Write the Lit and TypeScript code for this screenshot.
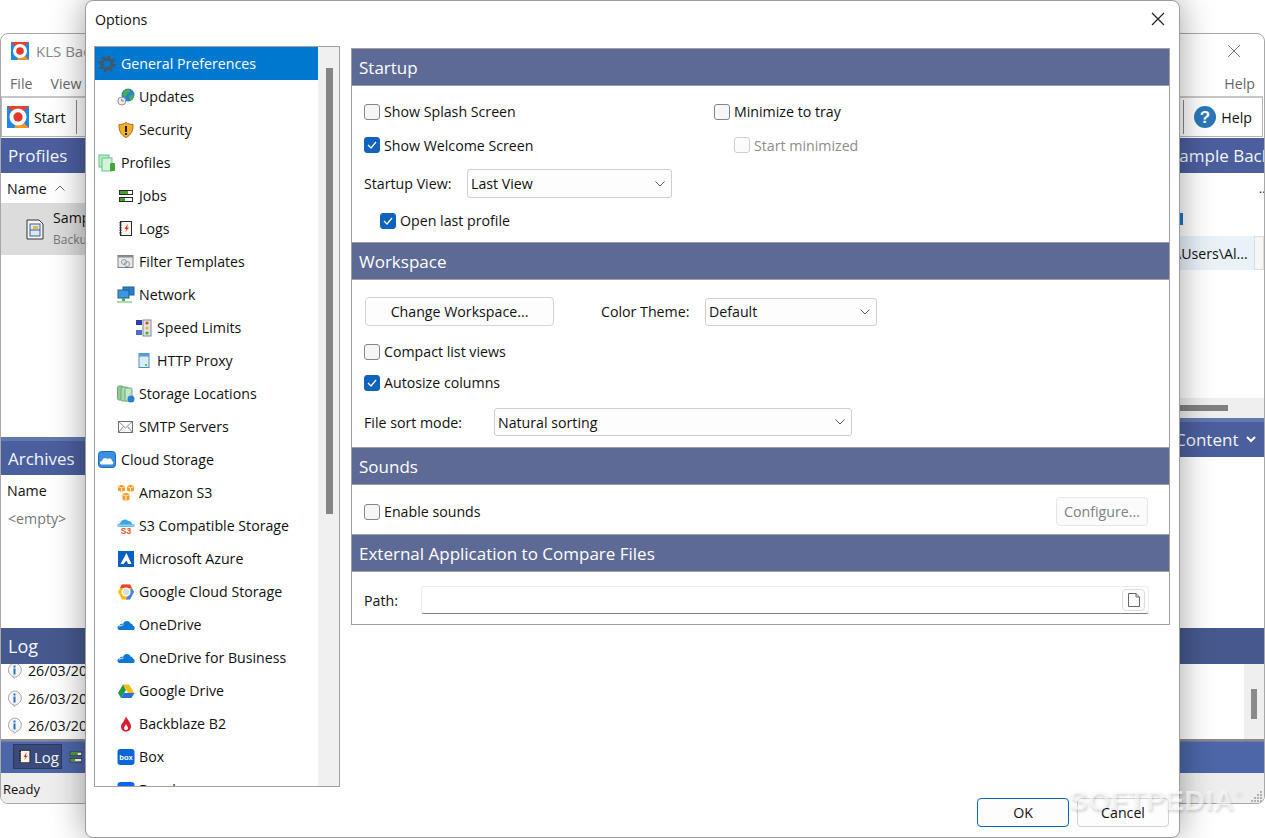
import { LitElement, html, css } from 'lit';
import { customElement } from 'lit/decorators.js';

const logo = (size: number) => html`<svg width=${size} height=${size} viewBox="0 0 18 18">
  <rect width="18" height="18" fill="#1e88e5"/>
  <path d="M0 0H18L9 9L0 0Z" fill="#e8412c"/>
  <path d="M9 9L18 0V18Z" fill="#1e88e5"/>
  <path d="M9 9L18 18H6Z" fill="#f39423"/>
  <circle cx="9" cy="9" r="7" fill="#fff"/>
  <circle cx="9" cy="9" r="3.8" fill="#e2382a"/>
</svg>`;

const box = (body: unknown) => html`<svg width="18" height="18" viewBox="0 0 18 18">${body}</svg>`;

const icons: Record<string, unknown> = {
  gear: box(html`<svg><circle cx="9" cy="9" r="5" fill="none" stroke="#44586a" stroke-width="3"/>
    <circle cx="9" cy="9" r="7.3" fill="none" stroke="#44586a" stroke-width="2.4" stroke-dasharray="3 2.73"/></svg>`),
  updates: box(html`<svg><circle cx="11" cy="7" r="6.500" fill="#2c7fd6"/>
    <path d="M7 2.500C9 1 12 0.800 13.500 2C13.500 5 10 5 10 7C10 9 7.500 9 5.500 7.500Z" fill="#45b04a"/>
    <path d="M12 8L17 6C17.500 9 15 12 13 13Z" fill="#45b04a"/>
    <circle cx="4.800" cy="13" r="4" fill="#eceff2" stroke="#8c9299"/>
    <path d="M4.800 10.800V13H6.800" fill="none" stroke="#777"/></svg>`),
  shield: box(html`<svg><path d="M9 1.500C11 3 13.500 3.500 16 3.500C16.500 10 13.500 14.500 9 16.500C4.500 14.500 1.500 10 2 3.500C4.500 3.500 7 3 9 1.500Z" fill="#f3ae2c" stroke="#a8701a"/>
    <rect x="8" y="5" width="2" height="6" fill="#1b1b1b"/><rect x="8" y="12" width="2" height="2" fill="#1b1b1b"/></svg>`),
  profiles: box(html`<svg><rect x="1" y="1" width="10" height="12" fill="#bdeccb" stroke="#62c184"/>
    <rect x="4" y="4" width="10" height="13" fill="#d4f3dd" stroke="#62c184"/>
    <rect x="12" y="9" width="5" height="8" rx="1" fill="#49a635"/></svg>`),
  jobs: box(html`<svg><rect x="2.500" y="3.500" width="13" height="4" fill="#fff" stroke="#2a2a2a"/><rect x="3" y="4" width="8" height="3" fill="#49a02e"/>
    <rect x="2.500" y="10.500" width="13" height="4" fill="#fff" stroke="#2a2a2a"/><rect x="3" y="11" width="5" height="3" fill="#49a02e"/></svg>`),
  logs: box(html`<svg><rect x="3.500" y="1.500" width="11" height="14" fill="#f7f5ee" stroke="#2a2a2a"/>
    <path d="M3.500 2V15" stroke="#2a2a2a" stroke-width="2" stroke-dasharray="1.500 1"/>
    <path d="M11 3.500L7.500 9H9.500L8 12.500L12 7.500H10Z" fill="#d8362a"/></svg>`),
  filter: box(html`<svg><rect x="1" y="2.500" width="15" height="12" fill="#e9e9e9" stroke="#808080"/><rect x="1" y="2.500" width="15" height="2" fill="#8a8a8a"/>
    <circle cx="7" cy="9" r="2.500" fill="none" stroke="#8d9aa6"/><circle cx="10" cy="11" r="2.500" fill="none" stroke="#8d9aa6"/></svg>`),
  network: box(html`<svg><rect x="6" y="1" width="11" height="8" fill="#2b7fc8" stroke="#1f5f98"/>
    <rect x="1" y="4" width="11" height="8" fill="#3d96dc" stroke="#1f5f98"/>
    <rect x="5" y="12" width="3" height="3" fill="#49b04a"/><rect x="0" y="15" width="15" height="2" fill="#a9dca9"/></svg>`),
  speed: box(html`<svg><rect x="1" y="1" width="6" height="5" fill="#2a3fa8"/><rect x="1" y="11" width="6" height="5" fill="#4a6fd0"/>
    <rect x="8" y="1" width="8" height="16" fill="#dfe3e8" stroke="#888"/>
    <circle cx="12" cy="4" r="1.600" fill="#e0402c"/><circle cx="12" cy="9" r="1.600" fill="#eeb52a"/><circle cx="12" cy="14" r="1.600" fill="#4aa83a"/></svg>`),
  proxy: box(html`<svg><rect x="4" y="1.500" width="10" height="14" fill="#dcecf7" stroke="#4a8fc0"/><rect x="4" y="1.500" width="10" height="3" fill="#5b9fd0"/>
    <rect x="10" y="12" width="2" height="2" fill="#62c050"/></svg>`),
  storage: box(html`<svg><rect x="0.500" y="1" width="6" height="14" rx="1.500" fill="#8fc99a" stroke="#6da86d"/>
    <rect x="4" y="2" width="7" height="14" rx="1.500" fill="#a8d8b0" stroke="#6da86d"/>
    <rect x="8" y="3" width="7" height="13" rx="1.500" fill="#c2e6c8" stroke="#6da86d"/>
    <circle cx="14" cy="14" r="3.500" fill="#2c7fd6"/></svg>`),
  smtp: box(html`<svg><rect x="1.500" y="3.500" width="14" height="11" fill="#fbfbfb" stroke="#6f6f6f"/>
    <path d="M1.500 3.500L8.500 10L15.500 3.500M1.500 14.500L6.500 8.500M15.500 14.500L10.500 8.500" fill="none" stroke="#8a8a8a"/></svg>`),
  cloud: box(html`<svg><rect x="0.500" y="0.500" width="17" height="16" rx="3" fill="#3b8fe0" stroke="#1f6bb8"/>
    <path d="M3.500 13.500C1.500 13.500 1.500 10 4 10C4.500 7.500 7.500 6 9.500 8C11 6.500 14 7.500 14 10C16 10.500 15.500 13.500 14 13.500Z" fill="#f6fbff"/></svg>`),
  s3: box(html`<svg><path d="M1 2L4.500 0.800L8 2V6.500L4.500 8L1 6.500Z" fill="#f79a1f"/><path d="M10 2L13.500 0.800L17 2V6.500L13.500 8L10 6.500Z" fill="#f79a1f"/>
    <path d="M5.500 10L9 8.800L12.500 10V15.500L9 17L5.500 15.500Z" fill="#f79a1f"/>
    <path d="M1 2.500L4.500 4L8 2.500M4.500 4V8M10 2.500L13.500 4L17 2.500M13.500 4V8M5.500 10.500L9 12L12.500 10.500M9 12V17" fill="none" stroke="#fff" stroke-width="0.800"/></svg>`),
  s3c: box(html`<svg><path d="M3 10C0 10 0 6.500 3 6.500C4 3 9 1 11 4C13 3.500 15 5 15 7C17.500 7 18 10 15.500 10Z" fill="#3aa6e0"/>
    <rect x="0" y="7.500" width="18" height="2" fill="#8fd0f2"/>
    <text x="9" y="16.500" text-anchor="middle" font-family="Liberation Sans" font-weight="700" font-size="8.500" fill="#d9531e">S3</text></svg>`),
  azure: box(html`<svg><rect x="1" y="1" width="16" height="16" fill="#0a5fc4"/><path d="M9.500 3L14.500 14H11L9.500 10.500L6.500 14H3.500Z" fill="#fff"/></svg>`),
  gcloud: box(html`<svg><path d="M5 1.500H13L17 9L13 16.500H5L1 9Z" fill="#fbbc05"/>
    <path d="M5 1.500H13L15 5H3Z" fill="#ea4335"/><path d="M15 5L17 9L13 16.500H9L12 9Z" fill="#4285f4"/>
    <circle cx="9" cy="9" r="3.800" fill="#dcdcdc" stroke="#fff" stroke-width="1.500"/></svg>`),
  onedrive: box(html`<svg><path d="M3 14C0 14 -0.500 10 2.500 9.500C3 8 4.500 7.500 6 8C7 4.500 12 4 13.500 7.500C15 7.500 16 8.500 16 9.800C18 10 18.500 14 16 14Z" fill="#0f78d4"/>
    <path d="M2 10.300L6.500 8.800" stroke="#fff" stroke-width="0.800"/></svg>`),
  gdrive: box(html`<svg><path d="M6 2.500H12L17.500 11.500H11.500Z" fill="#fbbc05"/>
    <path d="M4 16L7 11H17.500L14.500 16Z" fill="#2a6fe0"/><path d="M6 2.500L9 8L4 16L1 11Z" fill="#1e9b4a"/></svg>`),
  backblaze: box(html`<svg><path d="M9 1C9.500 4 14 7 14 11.500C14 14.500 12 16.500 9 16.500C6 16.500 4 14.500 4 11.500C4 8.500 8 6 9 1Z" fill="#d5202c"/>
    <path d="M9 9C9.500 11 11 11.500 11 13.200C11 14.400 10 15 9 15C8 15 7 14.400 7 13.200C7 11.500 8.500 11 9 9Z" fill="#fff"/></svg>`),
  boxapp: box(html`<svg><rect x="0.500" y="1" width="17" height="16" rx="3" fill="#0b65d8"/>
    <text x="9" y="12" text-anchor="middle" font-family="Liberation Sans" font-weight="700" font-size="7.500" fill="#fff">box</text></svg>`),
  dropbox: box(html`<svg><rect x="0.500" y="1" width="17" height="16" rx="3" fill="#0b65f0"/></svg>`),
};

const tree = [
  { level: 0, icon: 'gear', label: 'General Preferences', selected: true },
  { level: 1, icon: 'updates', label: 'Updates' },
  { level: 1, icon: 'shield', label: 'Security' },
  { level: 0, icon: 'profiles', label: 'Profiles' },
  { level: 1, icon: 'jobs', label: 'Jobs' },
  { level: 1, icon: 'logs', label: 'Logs' },
  { level: 1, icon: 'filter', label: 'Filter Templates' },
  { level: 1, icon: 'network', label: 'Network' },
  { level: 2, icon: 'speed', label: 'Speed Limits' },
  { level: 2, icon: 'proxy', label: 'HTTP Proxy' },
  { level: 1, icon: 'storage', label: 'Storage Locations' },
  { level: 1, icon: 'smtp', label: 'SMTP Servers' },
  { level: 0, icon: 'cloud', label: 'Cloud Storage' },
  { level: 1, icon: 's3', label: 'Amazon S3' },
  { level: 1, icon: 's3c', label: 'S3 Compatible Storage' },
  { level: 1, icon: 'azure', label: 'Microsoft Azure' },
  { level: 1, icon: 'gcloud', label: 'Google Cloud Storage' },
  { level: 1, icon: 'onedrive', label: 'OneDrive' },
  { level: 1, icon: 'onedrive', label: 'OneDrive for Business' },
  { level: 1, icon: 'gdrive', label: 'Google Drive' },
  { level: 1, icon: 'backblaze', label: 'Backblaze B2' },
  { level: 1, icon: 'boxapp', label: 'Box' },
  { level: 1, icon: 'dropbox', label: 'Dropbox' },
];

const chevron = html`<svg class="chev" width="10" height="6" viewBox="0 0 10 6"><path d="M0.500 0.500L5 5L9.500 0.500" fill="none" stroke="#555"/></svg>`;

@customElement('app-root')
export class AppRoot extends LitElement {
  static styles = css`
    :host {
      display: block;
      position: relative;
      width: 1265px;
      height: 838px;
      overflow: hidden;
      background: #fff;
      font-family: "Open Sans", "Noto Sans", sans-serif;
      font-size: 14.2px;
      color: #111;
    }
    * { box-sizing: border-box; }

    /* window behind the dialog */
    .main {
      position: absolute;
      left: 0;
      top: 33px;
      width: 1265px;
      height: 771px;
      display: flex;
      flex-direction: column;
      background: #fff;
      border: 1px solid #a8a8a8;
      border-radius: 8px;
      overflow: hidden;
    }
    .win-title { height: 31px; display: flex; align-items: center; justify-content: space-between; padding: 3px 23px 0 10px; flex: none; }
    .win-title .name { margin-left: 7px; color: #888; font-size: 15px; }
    .win-left { display: flex; align-items: center; }
    .menu { height: 31px; display: flex; justify-content: space-between; align-items: center; padding: 6px 9px 0 9px; color: #666; flex: none; }
    .menu .items { display: flex; gap: 18px; }
    .toolbar { height: 41px; flex: none; border: 1px solid #b4b4b4; border-top: 2px solid #c8c8c8; display: flex; justify-content: space-between; align-items: center; padding: 0 10px 0 5px; margin-right: 1px; }
    .tool { display: flex; align-items: center; gap: 5px; }
    .tool-sep { width: 1px; height: 34px; background: #888; }
    .tool-left { display: flex; align-items: center; gap: 10px; }
    .split { flex: 1; display: flex; margin-top: 1px; min-height: 0; }
    .col-left { flex: 1; display: flex; flex-direction: column; min-width: 0; }
    .col-right { width: 94px; flex: none; display: flex; flex-direction: column; overflow: hidden; }
    .bar {
      height: 35px;
      flex: none;
      background: #4b5f9e;
      color: #f4f6fb;
      font-size: 17px;
      display: flex;
      align-items: center;
      padding-left: 7px;
      white-space: nowrap;
    }
    .bar.strip { height: 38px; border-top: 4px solid #6478ad; }
    .bar.flush { padding-left: 0; }
    .col-head { height: 30px; display: flex; align-items: center; padding-left: 6px; flex: none; }
    .col-head .sort { margin-left: 8px; }
    .profile-row { height: 52px; background: #dcdcdc; display: flex; align-items: center; padding-left: 25px; flex: none; }
    .profile-row .lines { margin-left: 9px; display: flex; flex-direction: column; gap: 4px; margin-top: -3px; }
    .sub { font-size: 12px; color: #777; }
    .spacer-left { height: 182px; flex: none; }
    .spacer-right { height: 128px; flex: none; }
    .empty { padding: 4px 0 0 7px; color: #777; }
    .right-head { height: 30px; display: flex; align-items: center; flex: none; }
    .right-head .vsep { width: 1px; height: 30px; background: #ddd; margin-left: 82px; }
    .right-head .more { margin-left: 7px; font-size: 12px; }
    .marker { height: 33px; padding: 10px 0 0 10px; flex: none; }
    .marker div { width: 3px; height: 12px; background: #1c78c8; }
    .path-row { height: 34px; flex: none; display: flex; background: #e9f1f9; align-items: center; white-space: nowrap; justify-content: flex-end; }
    .path-row span { width: 84px; overflow: hidden; flex: none; padding-left: 6px; }
    .path-row i { width: 10px; height: 34px; background: #f6f6f6; border: 1px solid #ddd; flex: none; }
    .hscroll { height: 20px; flex: none; background: #efefef; padding-top: 7px; }
    .hscroll div { width: 48px; height: 6px; background: #808080; margin-left: 10px; }
    .content-bar { justify-content: space-between; padding: 0 8px 0 5px; height: 39px !important; }
    .log-bar { height: 36px; flex: none; background: #46598f; color: #f4f6fb; font-size: 18px; display: flex; align-items: center; padding: 0 0 0 7px; }
    .log { height: 77px; flex: none; display: flex; overflow: hidden; border-bottom: 2px solid #8a8a8a; }
    .log-list { flex: 1; display: flex; flex-direction: column; margin-top: -7px; }
    .log-row { height: 27.500px; flex: none; display: flex; align-items: center; padding-left: 5px; gap: 5px; }
    .log-track { width: 20px; flex: none; background: #efefef; padding: 25px 0 0 7px; }
    .log-track div { width: 6px; height: 30px; background: #8a8a8a; }
    .tabs { height: 32px; flex: none; background: #4d66a8; padding: 2px 0 0 12px; display: flex; gap: 6px; border-top: 1px solid #6b7aa6; }
    .tab { height: 25px; width: 49px; background: #3a4a7a; border: 1px solid #2d3a60; color: #f4f6fb; display: flex; align-items: center; gap: 1px; padding-left: 3px; font-size: 15px; }
    .tab svg, .tab-jobs svg { width: 16px; height: 16px; }
    .tab-jobs { display: flex; align-items: center; height: 25px; }
    .status { height: 30px; flex: none; display: flex; align-items: center; padding: 2px 0 0 2px; font-size: 13px; background: #eeeeee; }

    /* dialog */
    .dialog {
      position: absolute;
      left: 85px;
      top: 0;
      width: 1095px;
      height: 838px;
      background: #fff;
      border: 1px solid #9c9c9c;
      border-radius: 8px;
      box-shadow: 0 0 34px rgba(0, 0, 0, 0.38);
      display: flex;
      flex-direction: column;
    }
    .dlg-title { height: 45px; flex: none; display: flex; align-items: center; justify-content: space-between; padding: 0 14px 9px 9px; }
    .dlg-body { flex: none; height: 741px; display: flex; gap: 11px; padding: 0 9px 0 8px; }
    .tree { width: 246px; flex: none; height: 741px; border: 1px solid #a0a0a0; display: flex; overflow: hidden; }
    .tree-list { width: 223px; flex: none; }
    .tree-track { flex: 1; background: #f0f0f0; padding: 21px 0 0 8px; }
    .tree-thumb { width: 7px; height: 446px; background: #858585; }
    .node { height: 33px; display: flex; align-items: center; white-space: nowrap; }
    .node .ic { width: 18px; height: 18px; margin-right: 4px; flex: none; display: block; }
    .node .ic svg { display: block; }
    .lv0 { padding-left: 3px; }
    .lv0 .ic { margin-right: 5px; }
    .lv1 { padding-left: 22px; }
    .lv2 { padding-left: 40px; }
    .node.selected { background: #0078d0; color: #fff; }

    .pane { width: 819px; flex: none; align-self: flex-start; margin-top: 2px; border: 1px solid #a0a0a0; }
    .sec-head { height: 38px; background: #5d6a96; border-top: 1px solid #a0a0a0; border-bottom: 1px solid #a0a0a0; color: #fff; font-size: 17px; display: flex; align-items: center; padding-left: 7px; }
    .sec-head.first { height: 37px; border-top: 0; }
    .startup { height: 156px; display: flex; padding: 9px 0 0 12px; }
    .col-a { width: 350px; flex: none; }
    .line { height: 33px; display: flex; align-items: center; }
    .line.tall { height: 34px; }
    .line.tight { height: 31px; }
    .indent-a { padding-left: 16px; }
    .indent-b { padding-left: 20px; }
    .form { display: flex; align-items: center; }
    .gap-6 { margin-top: 6px; }
    .gap-7 { margin-top: 7px; }
    .gap-10 { margin-top: 10px; }
    .lbl-103 { width: 103px; flex: none; }
    .lbl-104 { width: 104px; flex: none; margin-left: 47px; }
    .lbl-130 { width: 130px; flex: none; }
    .lbl-57 { width: 57px; flex: none; }
    .cb { width: 16px; height: 16px; border: 1px solid #858585; border-radius: 3px; background: #f6f6f6; margin-right: 4px; flex: none; display: flex; align-items: center; justify-content: center; }
    .cb.on { background: #0f63bd; border-color: #0f63bd; }
    .cb.off { background: #fbfbfb; border-color: #cfcfcf; }
    .muted { color: #8c8c8c; }
    .select { height: 28px; border: 1px solid #cfcfcf; border-radius: 3px; background: #fdfdfd; display: flex; align-items: center; justify-content: space-between; padding: 0 6px 0 3px; flex: none; }
    .w-205 { width: 205px; height: 29px; }
    .w-172 { width: 172px; }
    .w-358 { width: 358px; }
    .chev { flex: none; }
    .btn { height: 29px; border: 1px solid #d2d2d2; border-radius: 4px; background: #fdfdfd; display: flex; align-items: center; justify-content: center; flex: none; }
    .workspace { height: 167px; padding: 17px 0 0 12px; }
    .btn-change { width: 189px; margin-left: 1px; }
    .sounds { height: 49px; display: flex; justify-content: space-between; align-items: center; padding: 12px 21px 8px 12px; }
    .sound-check { display: flex; align-items: center; }
    .btn-conf { width: 92px; background: #fbfbfb; border-color: #e6e6e6; color: #808080; }
    .external { height: 52px; padding: 14px 20px 0 12px; display: flex; align-items: flex-start; }
    .ext-label { height: 28px; display: flex; align-items: center; }
    .input { flex: 1; height: 28px; border: 1px solid #ececec; border-bottom: 1px solid #808080; border-radius: 3px; display: flex; align-items: center; justify-content: flex-end; padding-right: 3px; }
    .browse { width: 23px; height: 22px; border: 1px solid #dcdcdc; border-radius: 4px; display: flex; align-items: center; justify-content: center; background: #fdfdfd; }
    .dlg-foot { flex: 1; display: flex; justify-content: flex-end; gap: 8px; padding: 11px 10px 0 0; }
    .btn-foot { width: 92px; }
    .btn-ok { border-color: #0067c0; }

    /* overlays */
    .mark {
      position: absolute;
      left: 1069px;
      top: 785px;
      font-family: "Liberation Sans", sans-serif;
      font-weight: 700;
      font-size: 28px;
      letter-spacing: 0.600px;
      color: rgba(255, 255, 255, 0.6);
      text-shadow: 1px 2px 3px rgba(0, 0, 0, 0.16);
      white-space: nowrap;
    }
    .mark sup { font-size: 9px; vertical-align: 14px; }
    .grip { position: absolute; left: 1250px; top: 790px; width: 13px; height: 13px; }
  `;

  private check(on: boolean, label: string, disabled = false) {
    return html`<span class="cb ${on ? 'on' : ''} ${disabled ? 'off' : ''}">
        ${on ? html`<svg width="10" height="8" viewBox="0 0 10 8"><path d="M1 4L4 7L9 1" fill="none" stroke="#fff" stroke-width="1.200"/></svg>` : ''}
      </span><span class=${disabled ? 'muted' : ''}>${label}</span>`;
  }

  private mainWindow() {
    return html`<div class="main">
      <div class="win-title">
        <div class="win-left">${logo(18)}<span class="name">KLS Backup</span></div>
        <svg width="14" height="14" viewBox="0 0 14 14"><path d="M1 1L13 13M13 1L1 13" stroke="#777"/></svg>
      </div>
      <div class="menu"><div class="items"><span>File</span><span>View</span></div><span>Help</span></div>
      <div class="toolbar">
        <div class="tool-left"><div class="tool">${logo(22)}<span>Start</span></div><div class="tool-sep"></div></div>
        <div class="tool-left"><div class="tool-sep"></div>
          <div class="tool">
            <svg width="22" height="22" viewBox="0 0 22 22"><circle cx="11" cy="11" r="11" fill="#2b78b8"/><text x="11" y="17" text-anchor="middle" font-family="Liberation Sans" font-weight="700" font-size="17" fill="#fff">?</text></svg>
            <span>Help</span>
          </div>
        </div>
      </div>
      <div class="split">
        <div class="col-left">
          <div class="bar">Profiles</div>
          <div class="col-head">Name
            <svg class="sort" width="10" height="6" viewBox="0 0 10 6"><path d="M0.500 5.500L5 1L9.500 5.500" fill="none" stroke="#666"/></svg>
          </div>
          <div class="profile-row">
            <svg width="18" height="21" viewBox="0 0 18 21"><path d="M1 1H13L17 5V20H1Z" fill="#f4f4f4" stroke="#333"/><rect x="4" y="5" width="10" height="12" fill="#dde6f2" stroke="#3f5f9e"/><rect x="7" y="7" width="5" height="3" fill="#e9b44c"/><path d="M4 11H14" stroke="#3f5f9e"/></svg>
            <div class="lines"><span>Sample Backup</span><span class="sub">Backup</span></div>
          </div>
          <div class="spacer-left"></div>
          <div class="bar strip">Archives</div>
          <div class="col-head">Name</div>
          <div class="empty">&lt;empty&gt;</div>
        </div>
        <div class="col-right">
          <div class="bar flush">Sample Backup</div>
          <div class="right-head"><div class="vsep"></div><span class="more">..</span></div>
          <div class="marker"><div></div></div>
          <div class="path-row"><span>\\Users\\Al...</span><i></i></div>
          <div class="spacer-right"></div>
          <div class="hscroll"><div></div></div>
          <div class="bar strip content-bar">Content
            <svg width="10" height="7" viewBox="0 0 10 7"><path d="M1 1L5 5L9 1" fill="none" stroke="#fff" stroke-width="2"/></svg>
          </div>
        </div>
      </div>
      <div class="log-bar">Log</div>
      <div class="log">
        <div class="log-list">
          ${[0, 1, 2].map(() => html`<div class="log-row">
            <svg width="17" height="17" viewBox="0 0 17 17"><path d="M8.500 1A7 7 0 0 1 10 14.800L8 16.500V14.800A7 7 0 0 1 8.500 1Z" fill="#f2f4f7" stroke="#a8a8a8"/><rect x="7.500" y="3.500" width="2" height="2" fill="#2b6fc0"/><rect x="7.500" y="6.500" width="2" height="6" fill="#2b6fc0"/></svg>
            <span>26/03/20</span></div>`)}
        </div>
        <div class="log-track"><div></div></div>
      </div>
      <div class="tabs">
        <div class="tab">${icons.logs}<span>Log</span></div>
        <div class="tab-jobs">${icons.jobs}</div>
      </div>
      <div class="status">Ready</div>
    </div>`;
  }

  private dialog() {
    return html`<div class="dialog">
      <div class="dlg-title">
        <span>Options</span>
        <svg width="14" height="14" viewBox="0 0 14 14"><path d="M1 1L13 13M13 1L1 13" stroke="#222" stroke-width="1.200"/></svg>
      </div>
      <div class="dlg-body">
        <div class="tree">
          <div class="tree-list">
            ${tree.map(n => html`<div class="node lv${n.level} ${n.selected ? 'selected' : ''}">
              <span class="ic">${icons[n.icon]}</span><span>${n.label}</span></div>`)}
          </div>
          <div class="tree-track"><div class="tree-thumb"></div></div>
        </div>
        <div class="pane">
          <div class="sec-head first">Startup</div>
          <div class="startup">
            <div class="col-a">
              <div class="line">${this.check(false, 'Show Splash Screen')}</div>
              <div class="line tall">${this.check(true, 'Show Welcome Screen')}</div>
              <div class="form gap-7"><span class="lbl-103">Startup View:</span><div class="select w-205"><span>Last View</span>${chevron}</div></div>
              <div class="line gap-6 indent-a">${this.check(true, 'Open last profile')}</div>
            </div>
            <div>
              <div class="line">${this.check(false, 'Minimize to tray')}</div>
              <div class="line tall indent-b">${this.check(false, 'Start minimized', true)}</div>
            </div>
          </div>
          <div class="sec-head">Workspace</div>
          <div class="workspace">
            <div class="form">
              <div class="btn btn-change">Change Workspace...</div>
              <span class="lbl-104">Color Theme:</span>
              <div class="select w-172"><span>Default</span>${chevron}</div>
            </div>
            <div class="line tight gap-10">${this.check(false, 'Compact list views')}</div>
            <div class="line tight">${this.check(true, 'Autosize columns')}</div>
            <div class="form gap-10"><span class="lbl-130">File sort mode:</span><div class="select w-358"><span>Natural sorting</span>${chevron}</div></div>
          </div>
          <div class="sec-head">Sounds</div>
          <div class="sounds">
            <div class="sound-check">${this.check(false, 'Enable sounds')}</div>
            <div class="btn btn-conf">Configure...</div>
          </div>
          <div class="sec-head">External Application to Compare Files</div>
          <div class="external">
            <span class="ext-label lbl-57">Path:</span>
            <div class="input"><div class="browse">
              <svg width="14" height="14" viewBox="0 0 14 14"><path d="M1.500 0.500H9L12.500 4V13.500H1.500Z" fill="#fff" stroke="#666"/><path d="M9 0.500V4H12.500" fill="none" stroke="#666"/></svg>
            </div></div>
          </div>
        </div>
      </div>
      <div class="dlg-foot">
        <div class="btn btn-foot btn-ok">OK</div>
        <div class="btn btn-foot">Cancel</div>
      </div>
    </div>`;
  }

  render() {
    return html`
      ${this.mainWindow()}
      ${this.dialog()}
      <div class="mark">SOFTPEDIA<sup>®</sup></div>
      <svg class="grip" viewBox="0 0 13 13"><path d="M10 1h2v2h-2zM7 4h2v2H7zM10 4h2v2h-2zM4 7h2v2H4zM7 7h2v2H7zM10 7h2v2h-2zM1 10h2v2H1zM4 10h2v2H4zM7 10h2v2H7zM10 10h2v2h-2z" fill="#b0b0b0"/></svg>
    `;
  }
}
